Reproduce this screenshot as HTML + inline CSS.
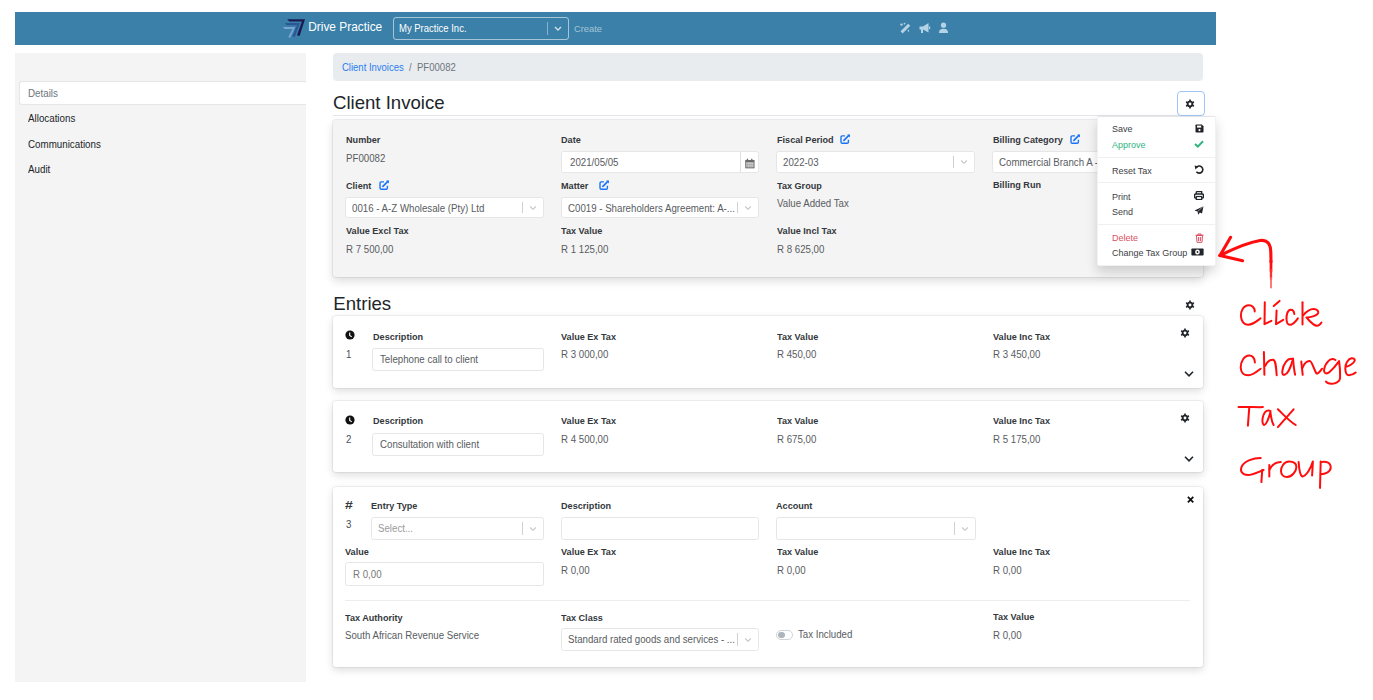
<!DOCTYPE html><html><head><meta charset="utf-8"><style>
html,body{margin:0;padding:0;background:#fff;width:1373px;height:700px;overflow:hidden;position:relative;font-family:"Liberation Sans",sans-serif}
.t{position:absolute;white-space:pre;}
.r{position:absolute;box-sizing:border-box}
</style></head><body>
<div class="r" style="left:15px;top:12px;width:1201px;height:33px;background:#3a80a8"></div>
<svg class="r" style="left:282px;top:19px;" width="24" height="19" viewBox="282 19 24 19"><polygon fill="#7aa6d4" points="282.9,27 295.2,27 290.3,37.8 288.2,37.2 292.4,29 284.6,29"/><polygon fill="#2b5797" points="284.8,23 300,23 294.7,37 292.3,36.3 297,25.3 286.8,25.3"/><polygon fill="#1b1a52" points="287.2,19.3 305,19.3 299.6,36 297,35.2 301.9,21.6 289.3,21.6"/></svg>
<div class="t" style="left:308.2px;top:15px;font-size:11.9px;line-height:24px;color:#ffffff;font-weight:400;">Drive Practice</div>
<div class="r" style="left:392.6px;top:17.3px;width:176.19999999999993px;height:22.400000000000002px;border:1px solid rgba(255,255,255,0.55);border-radius:3px;box-sizing:border-box"></div>
<div class="t" style="left:398.5px;top:17px;font-size:10.07px;line-height:24px;color:#ffffff;font-weight:400;transform:scaleX(0.9434);transform-origin:0 0;">My Practice Inc.</div>
<div class="r" style="left:547px;top:22px;width:1px;height:13px;background:rgba(255,255,255,0.4)"></div>
<svg class="r" style="left:553px;top:25px;" width="10" height="8" viewBox="0 0 10 8"><polyline points="2,2 5,5 8,2" fill="none" stroke="rgba(255,255,255,0.75)" stroke-width="1.4"/></svg>
<div class="t" style="left:573.5px;top:17px;font-size:9.89px;line-height:24px;color:rgba(255,255,255,0.55);font-weight:400;transform:scaleX(0.9434);transform-origin:0 0;">Create</div>
<svg class="r" style="left:899px;top:22px;" width="13" height="13" viewBox="0 0 13 13"><path d="M2.6 10.4 L10.2 2.8" stroke="#b5d3e6" stroke-width="2.9" stroke-linecap="butt"/><circle cx="2.5" cy="2.6" r="1.2" fill="#b5d3e6"/><circle cx="5.5" cy="1.6" r="0.9" fill="#b5d3e6"/><path d="M9.4 7.6 L10.3 8.8 L9.4 10 L8.5 8.8 Z" fill="#b5d3e6"/></svg>
<svg class="r" style="left:918px;top:22px;" width="13" height="12" viewBox="0 0 13 12"><path d="M1.5 4.5 H5 L10.5 1 V10.5 L5 7.5 V11 H3 V7.5 H1.5 Z" fill="#b5d3e6"/><rect x="11" y="4.5" width="1.2" height="2.5" fill="#b5d3e6"/></svg>
<svg class="r" style="left:938px;top:22px;" width="11" height="12" viewBox="0 0 11 12"><circle cx="5.5" cy="3.2" r="2.6" fill="#b5d3e6"/><path d="M1 11 Q1 6.8 5.5 6.8 Q10 6.8 10 11 Z" fill="#b5d3e6"/></svg>
<div class="r" style="left:15px;top:53px;width:291px;height:629px;background:#f4f4f4"></div>
<div class="r" style="left:18.5px;top:81px;width:287.5px;height:24px;background:#fff;border:1px solid #e6e6e6;border-right:none;border-radius:3px 0 0 3px;box-sizing:border-box"></div>
<div class="t" style="left:28.0px;top:82px;font-size:10.39px;line-height:24px;color:#6c757d;font-weight:400;transform:scaleX(0.9432);transform-origin:0 0;">Details</div>
<div class="t" style="left:28.0px;top:107px;font-size:10.39px;line-height:24px;color:#212529;font-weight:400;transform:scaleX(0.9432);transform-origin:0 0;">Allocations</div>
<div class="t" style="left:28.0px;top:133px;font-size:10.39px;line-height:24px;color:#212529;font-weight:400;transform:scaleX(0.9432);transform-origin:0 0;">Communications</div>
<div class="t" style="left:28.0px;top:158px;font-size:10.39px;line-height:24px;color:#212529;font-weight:400;transform:scaleX(0.9432);transform-origin:0 0;">Audit</div>
<div class="r" style="left:333px;top:53px;width:869.7px;height:28px;background:#e9ecef;border-radius:4px"></div>
<div class="t" style="left:342.2px;top:56px;font-size:10.07px;line-height:24px;color:#2a7ef0;font-weight:400;transform:scaleX(0.9434);transform-origin:0 0;">Client Invoices</div>
<div class="t" style="left:408.8px;top:56px;font-size:10.07px;line-height:24px;color:#6c757d;font-weight:400;transform:scaleX(0.9434);transform-origin:0 0;">/</div>
<div class="t" style="left:417.0px;top:56px;font-size:10.15px;line-height:24px;color:#6c757d;font-weight:400;transform:scaleX(0.9438);transform-origin:0 0;">PF00082</div>
<div class="t" style="left:333.0px;top:91px;font-size:18.6px;line-height:24px;color:#212529;font-weight:400;">Client Invoice</div>
<div class="r" style="left:333px;top:115px;width:870px;height:1px;background:#e3e6ea"></div>
<div class="r" style="left:1176.5px;top:91.4px;width:28.0px;height:24.39999999999999px;border:1.5px solid #9fc5f8;border-radius:4px;box-sizing:border-box;background:#fff"></div>
<div class="r" style="left:332.5px;top:120.3px;width:870.5px;height:156.5px;background:#f4f4f4;border-radius:3px;box-shadow:0 0 0 1px rgba(0,0,0,0.06),0 4px 10px rgba(0,0,0,0.14)"></div>
<div class="t" style="left:345.6px;top:128px;font-size:9.83px;line-height:24px;color:#34383d;font-weight:700;transform:scaleX(0.9257);transform-origin:0 0;">Number</div>
<div class="t" style="left:345.6px;top:147px;font-size:10.28px;line-height:24px;color:#585c61;font-weight:400;transform:scaleX(0.9436);transform-origin:0 0;">PF00082</div>
<div class="t" style="left:345.6px;top:174px;font-size:9.83px;line-height:24px;color:#34383d;font-weight:700;transform:scaleX(0.9257);transform-origin:0 0;">Client</div>
<svg class="r" style="left:378.5px;top:179.8px;" width="11" height="11" viewBox="0 0 11 11"><path d="M5 1.9 H2.3 Q1 1.9 1 3.2 V8 Q1 9.3 2.3 9.3 H7.1 Q8.4 9.3 8.4 8 V5.8" fill="none" stroke="#1a74f4" stroke-width="1.4"/><path d="M3.9 6.4 L8.6 1.7" stroke="#1a74f4" stroke-width="1.7" stroke-linecap="round" fill="none"/><polygon points="7.2,0.6 10,0.6 10,3.4" fill="#1a74f4"/></svg>
<div class="r" style="left:345px;top:197px;width:198.5px;height:21px;background:#fff;border:1px solid #e6e6e6;border-radius:2.5px"></div>
<div class="r" style="left:521.5px;top:202px;width:1.0px;height:11px;background:#d0d0d0"></div>
<svg class="r" style="left:528.5px;top:204.5px;" width="8" height="6" viewBox="0 0 8 6"><polyline points="1.2,1.5 4,4.3 6.8,1.5" fill="none" stroke="#c4c4c4" stroke-width="1.1"/></svg>
<div class="t" style="left:352.0px;top:197px;font-size:10.28px;line-height:24px;color:#585c61;font-weight:400;transform:scaleX(0.9436);transform-origin:0 0;">0016 - A-Z Wholesale (Pty) Ltd</div>
<div class="t" style="left:345.6px;top:219px;font-size:9.83px;line-height:24px;color:#34383d;font-weight:700;transform:scaleX(0.9257);transform-origin:0 0;">Value Excl Tax</div>
<div class="t" style="left:345.6px;top:238px;font-size:10.28px;line-height:24px;color:#585c61;font-weight:400;transform:scaleX(0.9436);transform-origin:0 0;">R 7 500,00</div>
<div class="t" style="left:561.4px;top:128px;font-size:9.83px;line-height:24px;color:#34383d;font-weight:700;transform:scaleX(0.9257);transform-origin:0 0;">Date</div>
<div class="r" style="left:561px;top:151px;width:198px;height:22px;background:#fff;border:1px solid #e6e6e6;border-radius:2.5px"></div>
<div class="r" style="left:740px;top:152px;width:1px;height:20px;background:#e0e0e0"></div>
<svg class="r" style="left:745px;top:157px;" width="10" height="12" viewBox="0 0 10 12"><path d="M2.4 1.2 L3.6 3.5 H1.2 Z M6.8 1.2 L8 3.5 H5.6 Z" fill="#6a6a6a"/><rect x="0.8" y="3.6" width="8.2" height="7.2" fill="none" stroke="#6a6a6a" stroke-width="1.1"/><rect x="0.8" y="3.6" width="8.2" height="1.8" fill="#6a6a6a"/><path d="M2.85 5 V10.5 M4.9 5 V10.5 M6.95 5 V10.5 M1 7.3 H8.8 M1 9.1 H8.8" stroke="#8a8a8a" stroke-width="0.7"/></svg>
<div class="t" style="left:569.5px;top:151px;font-size:10.28px;line-height:24px;color:#585c61;font-weight:400;transform:scaleX(0.9436);transform-origin:0 0;">2021/05/05</div>
<div class="t" style="left:561.4px;top:174px;font-size:9.83px;line-height:24px;color:#34383d;font-weight:700;transform:scaleX(0.9257);transform-origin:0 0;">Matter</div>
<svg class="r" style="left:598.6px;top:179.8px;" width="11" height="11" viewBox="0 0 11 11"><path d="M5 1.9 H2.3 Q1 1.9 1 3.2 V8 Q1 9.3 2.3 9.3 H7.1 Q8.4 9.3 8.4 8 V5.8" fill="none" stroke="#1a74f4" stroke-width="1.4"/><path d="M3.9 6.4 L8.6 1.7" stroke="#1a74f4" stroke-width="1.7" stroke-linecap="round" fill="none"/><polygon points="7.2,0.6 10,0.6 10,3.4" fill="#1a74f4"/></svg>
<div class="r" style="left:561px;top:197px;width:198px;height:21px;background:#fff;border:1px solid #e6e6e6;border-radius:2.5px"></div>
<div class="r" style="left:737px;top:202px;width:1px;height:11px;background:#d0d0d0"></div>
<svg class="r" style="left:744px;top:204.5px;" width="8" height="6" viewBox="0 0 8 6"><polyline points="1.2,1.5 4,4.3 6.8,1.5" fill="none" stroke="#c4c4c4" stroke-width="1.1"/></svg>
<div class="t" style="left:567.5px;top:197px;font-size:10.28px;line-height:24px;color:#585c61;font-weight:400;transform:scaleX(0.9436);transform-origin:0 0;">C0019 - Shareholders Agreement: A-...</div>
<div class="t" style="left:561.4px;top:219px;font-size:9.83px;line-height:24px;color:#34383d;font-weight:700;transform:scaleX(0.9257);transform-origin:0 0;">Tax Value</div>
<div class="t" style="left:561.4px;top:238px;font-size:10.28px;line-height:24px;color:#585c61;font-weight:400;transform:scaleX(0.9436);transform-origin:0 0;">R 1 125,00</div>
<div class="t" style="left:776.8px;top:128px;font-size:9.83px;line-height:24px;color:#34383d;font-weight:700;transform:scaleX(0.9257);transform-origin:0 0;">Fiscal Period</div>
<svg class="r" style="left:840.3px;top:134px;" width="11" height="11" viewBox="0 0 11 11"><path d="M5 1.9 H2.3 Q1 1.9 1 3.2 V8 Q1 9.3 2.3 9.3 H7.1 Q8.4 9.3 8.4 8 V5.8" fill="none" stroke="#1a74f4" stroke-width="1.4"/><path d="M3.9 6.4 L8.6 1.7" stroke="#1a74f4" stroke-width="1.7" stroke-linecap="round" fill="none"/><polygon points="7.2,0.6 10,0.6 10,3.4" fill="#1a74f4"/></svg>
<div class="r" style="left:776px;top:151px;width:199px;height:22px;background:#fff;border:1px solid #e6e6e6;border-radius:2.5px"></div>
<div class="r" style="left:953px;top:156px;width:1px;height:12px;background:#d0d0d0"></div>
<svg class="r" style="left:960px;top:159.0px;" width="8" height="6" viewBox="0 0 8 6"><polyline points="1.2,1.5 4,4.3 6.8,1.5" fill="none" stroke="#c4c4c4" stroke-width="1.1"/></svg>
<div class="t" style="left:783.3px;top:151px;font-size:10.28px;line-height:24px;color:#585c61;font-weight:400;transform:scaleX(0.9436);transform-origin:0 0;">2022-03</div>
<div class="t" style="left:776.8px;top:174px;font-size:9.83px;line-height:24px;color:#34383d;font-weight:700;transform:scaleX(0.9257);transform-origin:0 0;">Tax Group</div>
<div class="t" style="left:776.8px;top:192px;font-size:10.28px;line-height:24px;color:#585c61;font-weight:400;transform:scaleX(0.9436);transform-origin:0 0;">Value Added Tax</div>
<div class="t" style="left:776.8px;top:219px;font-size:9.83px;line-height:24px;color:#34383d;font-weight:700;transform:scaleX(0.9257);transform-origin:0 0;">Value Incl Tax</div>
<div class="t" style="left:776.8px;top:238px;font-size:10.28px;line-height:24px;color:#585c61;font-weight:400;transform:scaleX(0.9436);transform-origin:0 0;">R 8 625,00</div>
<div class="t" style="left:992.5px;top:128px;font-size:9.83px;line-height:24px;color:#34383d;font-weight:700;transform:scaleX(0.9257);transform-origin:0 0;">Billing Category</div>
<svg class="r" style="left:1069.9px;top:134px;" width="11" height="11" viewBox="0 0 11 11"><path d="M5 1.9 H2.3 Q1 1.9 1 3.2 V8 Q1 9.3 2.3 9.3 H7.1 Q8.4 9.3 8.4 8 V5.8" fill="none" stroke="#1a74f4" stroke-width="1.4"/><path d="M3.9 6.4 L8.6 1.7" stroke="#1a74f4" stroke-width="1.7" stroke-linecap="round" fill="none"/><polygon points="7.2,0.6 10,0.6 10,3.4" fill="#1a74f4"/></svg>
<div class="r" style="left:992px;top:151px;width:198px;height:22px;background:#fff;border:1px solid #e6e6e6;border-radius:2.5px"></div>
<div class="t" style="left:999.0px;top:151px;font-size:10.28px;line-height:24px;color:#585c61;font-weight:400;transform:scaleX(0.9436);transform-origin:0 0;">Commercial Branch A -</div>
<div class="t" style="left:992.5px;top:173px;font-size:9.83px;line-height:24px;color:#34383d;font-weight:700;transform:scaleX(0.9257);transform-origin:0 0;">Billing Run</div>
<div class="r" style="left:1097px;top:115.7px;width:118.79999999999995px;height:150.0px;background:#fff;border:1px solid rgba(0,0,0,0.05);border-top-color:rgba(0,0,0,0.1);border-radius:2px;box-shadow:0 6px 12px rgba(0,0,0,0.16)"></div>
<div class="t" style="left:1111.5px;top:117px;font-size:9.54px;line-height:24px;color:#3d4146;font-weight:400;transform:scaleX(0.9434);transform-origin:0 0;">Save</div>
<div class="t" style="left:1111.5px;top:133px;font-size:9.54px;line-height:24px;color:#2eb67f;font-weight:400;transform:scaleX(0.9434);transform-origin:0 0;">Approve</div>
<div class="r" style="left:1097.5px;top:157px;width:118.0px;height:1px;background:#eef0f2"></div>
<div class="t" style="left:1111.5px;top:159px;font-size:9.54px;line-height:24px;color:#3d4146;font-weight:400;transform:scaleX(0.9434);transform-origin:0 0;">Reset Tax</div>
<div class="r" style="left:1097.5px;top:182px;width:118.0px;height:1px;background:#eef0f2"></div>
<div class="t" style="left:1111.5px;top:185px;font-size:9.54px;line-height:24px;color:#3d4146;font-weight:400;transform:scaleX(0.9434);transform-origin:0 0;">Print</div>
<div class="t" style="left:1111.5px;top:200px;font-size:9.54px;line-height:24px;color:#3d4146;font-weight:400;transform:scaleX(0.9434);transform-origin:0 0;">Send</div>
<div class="r" style="left:1097.5px;top:224px;width:118.0px;height:1px;background:#eef0f2"></div>
<div class="t" style="left:1111.5px;top:226px;font-size:9.54px;line-height:24px;color:#dc4e63;font-weight:400;transform:scaleX(0.9434);transform-origin:0 0;">Delete</div>
<div class="t" style="left:1111.5px;top:241px;font-size:9.54px;line-height:24px;color:#3d4146;font-weight:400;transform:scaleX(0.9434);transform-origin:0 0;">Change Tax Group</div>
<svg class="r" style="left:1195px;top:123.5px;" width="9" height="9" viewBox="0 0 9 9"><path d="M0.5 1.2 Q0.5 0.5 1.2 0.5 H6.8 L8.5 2.2 V7.8 Q8.5 8.5 7.8 8.5 H1.2 Q0.5 8.5 0.5 7.8 Z" fill="#212529"/><rect x="2" y="1.6" width="4.2" height="2" fill="#fff"/><circle cx="4.5" cy="6.1" r="1.1" fill="#fff"/></svg>
<svg class="r" style="left:1194px;top:139.5px;" width="10" height="8" viewBox="0 0 10 8"><polyline points="1,4 3.8,6.6 9,1.2" fill="none" stroke="#2eb67f" stroke-width="2"/></svg>
<svg class="r" style="left:1194px;top:165px;" width="10" height="9" viewBox="0 0 10 9"><path d="M2.2 2.6 A3.6 3.6 0 1 1 2.4 6.8" fill="none" stroke="#212529" stroke-width="1.6"/><polygon points="0.6,0.6 4.6,1.4 1.4,4.4" fill="#212529"/></svg>
<svg class="r" style="left:1194px;top:191px;" width="10" height="9" viewBox="0 0 10 9"><path d="M2.3 0.6 H7.7 V3 M2.3 3 V0.6" fill="none" stroke="#212529" stroke-width="1.3"/><rect x="0.6" y="3" width="8.8" height="4" rx="1" fill="none" stroke="#212529" stroke-width="1.4"/><rect x="2.3" y="5.5" width="5.4" height="3" fill="#fff" stroke="#212529" stroke-width="1.2"/></svg>
<svg class="r" style="left:1194px;top:206px;" width="10" height="9" viewBox="0 0 10 9"><path d="M9.5 0.3 L0.5 4.5 L3.5 5.6 L4.3 8.7 L5.8 6.5 L8 7.5 Z" fill="#212529"/><path d="M9.5 0.3 L3.6 5.5" stroke="#fff" stroke-width="0.5"/></svg>
<svg class="r" style="left:1195px;top:232.5px;" width="9" height="10" viewBox="0 0 9 10"><path d="M1.5 2.5 H7.5 L7 9.3 H2 Z M0.5 2.2 H8.5 M3 2.2 V1 H6 V2.2 M3.6 4 V8 M5.4 4 V8" fill="none" stroke="#dc4e63" stroke-width="1"/></svg>
<svg class="r" style="left:1191px;top:248px;" width="13" height="8" viewBox="0 0 13 8"><rect x="0.4" y="0.4" width="12.2" height="7.2" rx="0.8" fill="#212529"/><ellipse cx="6.5" cy="4" rx="2.3" ry="2.6" fill="#fff"/><circle cx="6.5" cy="4" r="0.9" fill="#212529"/></svg>
<svg class="r" style="left:1184.15px;top:97.5px;" width="12" height="12" viewBox="1184.15 97.5 12 12"><polygon points="1193.48,103.50 1193.47,103.79 1193.43,104.08 1193.37,104.36 1194.38,105.04 1194.23,105.40 1194.05,105.75 1193.84,106.08 1193.60,106.39 1192.50,105.85 1192.29,106.05 1192.06,106.23 1191.82,106.38 1191.56,106.52 1191.29,106.63 1191.01,106.72 1190.93,107.93 1190.54,107.98 1190.15,108.00 1189.76,107.98 1189.37,107.93 1189.29,106.72 1189.01,106.63 1188.74,106.52 1188.49,106.38 1188.24,106.23 1188.01,106.05 1187.80,105.85 1186.70,106.39 1186.46,106.08 1186.25,105.75 1186.07,105.40 1185.92,105.04 1186.93,104.36 1186.87,104.08 1186.83,103.79 1186.82,103.50 1186.83,103.21 1186.87,102.92 1186.93,102.64 1185.92,101.96 1186.07,101.60 1186.25,101.25 1186.46,100.92 1186.70,100.61 1187.80,101.15 1188.01,100.95 1188.24,100.77 1188.49,100.62 1188.74,100.48 1189.01,100.37 1189.29,100.28 1189.37,99.07 1189.76,99.02 1190.15,99.00 1190.54,99.02 1190.93,99.07 1191.01,100.28 1191.29,100.37 1191.56,100.48 1191.82,100.62 1192.06,100.77 1192.29,100.95 1192.50,101.15 1193.60,100.61 1193.84,100.92 1194.05,101.25 1194.23,101.60 1194.38,101.96 1193.37,102.64 1193.43,102.92 1193.47,103.21" fill="#212529"/><circle cx="1190.15" cy="103.5" r="1.45" fill="#fff"/></svg>
<div class="t" style="left:333.3px;top:292px;font-size:18.6px;line-height:24px;color:#212529;font-weight:400;">Entries</div>
<svg class="r" style="left:1184.3px;top:299.4px;" width="12" height="12" viewBox="1184.3 299.4 12 12"><polygon points="1193.63,305.40 1193.62,305.69 1193.58,305.98 1193.52,306.26 1194.53,306.94 1194.38,307.30 1194.20,307.65 1193.99,307.98 1193.75,308.29 1192.65,307.75 1192.44,307.95 1192.21,308.13 1191.96,308.28 1191.71,308.42 1191.44,308.53 1191.16,308.62 1191.08,309.83 1190.69,309.88 1190.30,309.90 1189.91,309.88 1189.52,309.83 1189.44,308.62 1189.16,308.53 1188.89,308.42 1188.63,308.28 1188.39,308.13 1188.16,307.95 1187.95,307.75 1186.85,308.29 1186.61,307.98 1186.40,307.65 1186.22,307.30 1186.07,306.94 1187.08,306.26 1187.02,305.98 1186.98,305.69 1186.97,305.40 1186.98,305.11 1187.02,304.82 1187.08,304.54 1186.07,303.86 1186.22,303.50 1186.40,303.15 1186.61,302.82 1186.85,302.51 1187.95,303.05 1188.16,302.85 1188.39,302.67 1188.63,302.52 1188.89,302.38 1189.16,302.27 1189.44,302.18 1189.52,300.97 1189.91,300.92 1190.30,300.90 1190.69,300.92 1191.08,300.97 1191.16,302.18 1191.44,302.27 1191.71,302.38 1191.96,302.52 1192.21,302.67 1192.44,302.85 1192.65,303.05 1193.75,302.51 1193.99,302.82 1194.20,303.15 1194.38,303.50 1194.53,303.86 1193.52,304.54 1193.58,304.82 1193.62,305.11" fill="#212529"/><circle cx="1190.3" cy="305.4" r="1.45" fill="#fff"/></svg>
<div class="r" style="left:333px;top:316.4px;width:870px;height:71.19999999999999px;background:#fff;border-radius:3px;box-shadow:0 0 0 1px rgba(0,0,0,0.05),0 3px 9px rgba(0,0,0,0.14)"></div>
<svg class="r" style="left:343.9px;top:329.4px;" width="12" height="12" viewBox="343.9 329.4 12 12"><circle cx="349.9" cy="335.4" r="4.6" fill="#111"/><path d="M349.59999999999997 332.79999999999995 V335.9 L351.7 337.29999999999995" fill="none" stroke="#fff" stroke-width="1.1"/></svg>
<div class="t" style="left:372.5px;top:325px;font-size:9.83px;line-height:24px;color:#34383d;font-weight:700;transform:scaleX(0.9257);transform-origin:0 0;">Description</div>
<div class="t" style="left:346.0px;top:343px;font-size:10.28px;line-height:24px;color:#495057;font-weight:400;transform:scaleX(0.9436);transform-origin:0 0;">1</div>
<div class="r" style="left:372px;top:348px;width:172px;height:23px;background:#fff;border:1px solid #e6e6e6;border-radius:2.5px"></div>
<div class="t" style="left:380.3px;top:348px;font-size:10.28px;line-height:24px;color:#585c61;font-weight:400;transform:scaleX(0.9436);transform-origin:0 0;">Telephone call to client</div>
<div class="t" style="left:561.4px;top:325px;font-size:9.83px;line-height:24px;color:#34383d;font-weight:700;transform:scaleX(0.9257);transform-origin:0 0;">Value Ex Tax</div>
<div class="t" style="left:561.4px;top:343px;font-size:10.28px;line-height:24px;color:#585c61;font-weight:400;transform:scaleX(0.9436);transform-origin:0 0;">R 3 000,00</div>
<div class="t" style="left:776.7px;top:325px;font-size:9.83px;line-height:24px;color:#34383d;font-weight:700;transform:scaleX(0.9257);transform-origin:0 0;">Tax Value</div>
<div class="t" style="left:776.7px;top:343px;font-size:10.28px;line-height:24px;color:#585c61;font-weight:400;transform:scaleX(0.9436);transform-origin:0 0;">R 450,00</div>
<div class="t" style="left:992.6px;top:325px;font-size:9.83px;line-height:24px;color:#34383d;font-weight:700;transform:scaleX(0.9257);transform-origin:0 0;">Value Inc Tax</div>
<div class="t" style="left:992.6px;top:343px;font-size:10.28px;line-height:24px;color:#585c61;font-weight:400;transform:scaleX(0.9436);transform-origin:0 0;">R 3 450,00</div>
<svg class="r" style="left:1179.1px;top:327.29999999999995px;" width="12" height="12" viewBox="1179.1 327.29999999999995 12 12"><polygon points="1188.43,333.30 1188.42,333.59 1188.38,333.88 1188.32,334.16 1189.33,334.84 1189.18,335.20 1189.00,335.55 1188.79,335.88 1188.55,336.19 1187.45,335.65 1187.24,335.85 1187.01,336.03 1186.76,336.18 1186.51,336.32 1186.24,336.43 1185.96,336.52 1185.88,337.73 1185.49,337.78 1185.10,337.80 1184.71,337.78 1184.32,337.73 1184.24,336.52 1183.96,336.43 1183.69,336.32 1183.43,336.18 1183.19,336.03 1182.96,335.85 1182.75,335.65 1181.65,336.19 1181.41,335.88 1181.20,335.55 1181.02,335.20 1180.87,334.84 1181.88,334.16 1181.82,333.88 1181.78,333.59 1181.77,333.30 1181.78,333.01 1181.82,332.72 1181.88,332.44 1180.87,331.76 1181.02,331.40 1181.20,331.05 1181.41,330.72 1181.65,330.41 1182.75,330.95 1182.96,330.75 1183.19,330.57 1183.43,330.42 1183.69,330.28 1183.96,330.17 1184.24,330.08 1184.32,328.87 1184.71,328.82 1185.10,328.80 1185.49,328.82 1185.88,328.87 1185.96,330.08 1186.24,330.17 1186.51,330.28 1186.76,330.42 1187.01,330.57 1187.24,330.75 1187.45,330.95 1188.55,330.41 1188.79,330.72 1189.00,331.05 1189.18,331.40 1189.33,331.76 1188.32,332.44 1188.38,332.72 1188.42,333.01" fill="#212529"/><circle cx="1185.1" cy="333.29999999999995" r="1.45" fill="#fff"/></svg>
<svg class="r" style="left:1184.3px;top:370.4px;" width="10" height="8" viewBox="0 0 10 8"><polyline points="1,1.8 5,5.8 9,1.8" fill="none" stroke="#212529" stroke-width="1.6"/></svg>
<div class="r" style="left:333px;top:401.3px;width:870px;height:71.19999999999999px;background:#fff;border-radius:3px;box-shadow:0 0 0 1px rgba(0,0,0,0.05),0 3px 9px rgba(0,0,0,0.14)"></div>
<svg class="r" style="left:343.9px;top:414.3px;" width="12" height="12" viewBox="343.9 414.3 12 12"><circle cx="349.9" cy="420.3" r="4.6" fill="#111"/><path d="M349.59999999999997 417.7 V420.8 L351.7 422.2" fill="none" stroke="#fff" stroke-width="1.1"/></svg>
<div class="t" style="left:372.5px;top:409px;font-size:9.83px;line-height:24px;color:#34383d;font-weight:700;transform:scaleX(0.9257);transform-origin:0 0;">Description</div>
<div class="t" style="left:346.0px;top:428px;font-size:10.28px;line-height:24px;color:#495057;font-weight:400;transform:scaleX(0.9436);transform-origin:0 0;">2</div>
<div class="r" style="left:372px;top:433px;width:172px;height:23px;background:#fff;border:1px solid #e6e6e6;border-radius:2.5px"></div>
<div class="t" style="left:380.3px;top:433px;font-size:10.28px;line-height:24px;color:#585c61;font-weight:400;transform:scaleX(0.9436);transform-origin:0 0;">Consultation with client</div>
<div class="t" style="left:561.4px;top:409px;font-size:9.83px;line-height:24px;color:#34383d;font-weight:700;transform:scaleX(0.9257);transform-origin:0 0;">Value Ex Tax</div>
<div class="t" style="left:561.4px;top:428px;font-size:10.28px;line-height:24px;color:#585c61;font-weight:400;transform:scaleX(0.9436);transform-origin:0 0;">R 4 500,00</div>
<div class="t" style="left:776.7px;top:409px;font-size:9.83px;line-height:24px;color:#34383d;font-weight:700;transform:scaleX(0.9257);transform-origin:0 0;">Tax Value</div>
<div class="t" style="left:776.7px;top:428px;font-size:10.28px;line-height:24px;color:#585c61;font-weight:400;transform:scaleX(0.9436);transform-origin:0 0;">R 675,00</div>
<div class="t" style="left:992.6px;top:409px;font-size:9.83px;line-height:24px;color:#34383d;font-weight:700;transform:scaleX(0.9257);transform-origin:0 0;">Value Inc Tax</div>
<div class="t" style="left:992.6px;top:428px;font-size:10.28px;line-height:24px;color:#585c61;font-weight:400;transform:scaleX(0.9436);transform-origin:0 0;">R 5 175,00</div>
<svg class="r" style="left:1179.1px;top:412.2px;" width="12" height="12" viewBox="1179.1 412.2 12 12"><polygon points="1188.43,418.20 1188.42,418.49 1188.38,418.78 1188.32,419.06 1189.33,419.74 1189.18,420.10 1189.00,420.45 1188.79,420.78 1188.55,421.09 1187.45,420.55 1187.24,420.75 1187.01,420.93 1186.76,421.08 1186.51,421.22 1186.24,421.33 1185.96,421.42 1185.88,422.63 1185.49,422.68 1185.10,422.70 1184.71,422.68 1184.32,422.63 1184.24,421.42 1183.96,421.33 1183.69,421.22 1183.43,421.08 1183.19,420.93 1182.96,420.75 1182.75,420.55 1181.65,421.09 1181.41,420.78 1181.20,420.45 1181.02,420.10 1180.87,419.74 1181.88,419.06 1181.82,418.78 1181.78,418.49 1181.77,418.20 1181.78,417.91 1181.82,417.62 1181.88,417.34 1180.87,416.66 1181.02,416.30 1181.20,415.95 1181.41,415.62 1181.65,415.31 1182.75,415.85 1182.96,415.65 1183.19,415.47 1183.43,415.32 1183.69,415.18 1183.96,415.07 1184.24,414.98 1184.32,413.77 1184.71,413.72 1185.10,413.70 1185.49,413.72 1185.88,413.77 1185.96,414.98 1186.24,415.07 1186.51,415.18 1186.76,415.32 1187.01,415.47 1187.24,415.65 1187.45,415.85 1188.55,415.31 1188.79,415.62 1189.00,415.95 1189.18,416.30 1189.33,416.66 1188.32,417.34 1188.38,417.62 1188.42,417.91" fill="#212529"/><circle cx="1185.1" cy="418.2" r="1.45" fill="#fff"/></svg>
<svg class="r" style="left:1184.3px;top:455.3px;" width="10" height="8" viewBox="0 0 10 8"><polyline points="1,1.8 5,5.8 9,1.8" fill="none" stroke="#212529" stroke-width="1.6"/></svg>
<div class="r" style="left:333px;top:487px;width:870px;height:180px;background:#fff;border-radius:3px;box-shadow:0 0 0 1px rgba(0,0,0,0.05),0 3px 9px rgba(0,0,0,0.14)"></div>
<div class="t" style="left:345.2px;top:494px;font-size:10.0px;line-height:24px;color:#34383d;font-weight:700;transform:scaleX(1.4000);transform-origin:0 0;">#</div>
<div class="t" style="left:371.4px;top:494px;font-size:9.83px;line-height:24px;color:#34383d;font-weight:700;transform:scaleX(0.9257);transform-origin:0 0;">Entry Type</div>
<div class="t" style="left:561.4px;top:494px;font-size:9.83px;line-height:24px;color:#34383d;font-weight:700;transform:scaleX(0.9257);transform-origin:0 0;">Description</div>
<div class="t" style="left:776.4px;top:494px;font-size:9.83px;line-height:24px;color:#34383d;font-weight:700;transform:scaleX(0.9257);transform-origin:0 0;">Account</div>
<svg class="r" style="left:1186px;top:495px;" width="9" height="9" viewBox="0 0 9 9"><path d="M1.9 1.9 L7.3 7.3 M7.3 1.9 L1.9 7.3" stroke="#111" stroke-width="1.8"/></svg>
<div class="t" style="left:346.0px;top:513px;font-size:10.28px;line-height:24px;color:#495057;font-weight:400;transform:scaleX(0.9436);transform-origin:0 0;">3</div>
<div class="r" style="left:371px;top:517px;width:173px;height:23px;background:#fff;border:1px solid #e6e6e6;border-radius:2.5px"></div>
<div class="r" style="left:522px;top:522px;width:1px;height:13px;background:#d0d0d0"></div>
<svg class="r" style="left:529px;top:525.5px;" width="8" height="6" viewBox="0 0 8 6"><polyline points="1.2,1.5 4,4.3 6.8,1.5" fill="none" stroke="#c4c4c4" stroke-width="1.1"/></svg>
<div class="t" style="left:377.6px;top:517px;font-size:10.28px;line-height:24px;color:#9a9a9a;font-weight:400;transform:scaleX(0.9436);transform-origin:0 0;">Select...</div>
<div class="r" style="left:561px;top:517px;width:198px;height:23px;background:#fff;border:1px solid #e6e6e6;border-radius:2.5px"></div>
<div class="r" style="left:776px;top:517px;width:199.5px;height:23px;background:#fff;border:1px solid #e6e6e6;border-radius:2.5px"></div>
<div class="r" style="left:953.5px;top:522px;width:1.0px;height:13px;background:#d0d0d0"></div>
<svg class="r" style="left:960.5px;top:525.5px;" width="8" height="6" viewBox="0 0 8 6"><polyline points="1.2,1.5 4,4.3 6.8,1.5" fill="none" stroke="#c4c4c4" stroke-width="1.1"/></svg>
<div class="t" style="left:345.4px;top:540px;font-size:9.83px;line-height:24px;color:#34383d;font-weight:700;transform:scaleX(0.9257);transform-origin:0 0;">Value</div>
<div class="t" style="left:561.4px;top:540px;font-size:9.83px;line-height:24px;color:#34383d;font-weight:700;transform:scaleX(0.9257);transform-origin:0 0;">Value Ex Tax</div>
<div class="t" style="left:776.7px;top:540px;font-size:9.83px;line-height:24px;color:#34383d;font-weight:700;transform:scaleX(0.9257);transform-origin:0 0;">Tax Value</div>
<div class="t" style="left:992.6px;top:540px;font-size:9.83px;line-height:24px;color:#34383d;font-weight:700;transform:scaleX(0.9257);transform-origin:0 0;">Value Inc Tax</div>
<div class="r" style="left:345px;top:562px;width:198.5px;height:24px;background:#fff;border:1px solid #e6e6e6;border-radius:2.5px"></div>
<div class="t" style="left:352.5px;top:563px;font-size:10.28px;line-height:24px;color:#777;font-weight:400;transform:scaleX(0.9436);transform-origin:0 0;">R 0,00</div>
<div class="t" style="left:561.4px;top:559px;font-size:10.28px;line-height:24px;color:#585c61;font-weight:400;transform:scaleX(0.9436);transform-origin:0 0;">R 0,00</div>
<div class="t" style="left:776.7px;top:559px;font-size:10.28px;line-height:24px;color:#585c61;font-weight:400;transform:scaleX(0.9436);transform-origin:0 0;">R 0,00</div>
<div class="t" style="left:992.6px;top:559px;font-size:10.28px;line-height:24px;color:#585c61;font-weight:400;transform:scaleX(0.9436);transform-origin:0 0;">R 0,00</div>
<div class="r" style="left:345.4px;top:600px;width:845.1px;height:1px;background:#ededed"></div>
<div class="t" style="left:345.4px;top:606px;font-size:9.83px;line-height:24px;color:#34383d;font-weight:700;transform:scaleX(0.9257);transform-origin:0 0;">Tax Authority</div>
<div class="t" style="left:345.4px;top:624px;font-size:10.28px;line-height:24px;color:#585c61;font-weight:400;transform:scaleX(0.9436);transform-origin:0 0;">South African Revenue Service</div>
<div class="t" style="left:561.4px;top:606px;font-size:9.83px;line-height:24px;color:#34383d;font-weight:700;transform:scaleX(0.9257);transform-origin:0 0;">Tax Class</div>
<div class="r" style="left:561px;top:628px;width:198px;height:23px;background:#fff;border:1px solid #e6e6e6;border-radius:2.5px"></div>
<div class="r" style="left:737px;top:633px;width:1px;height:13px;background:#d0d0d0"></div>
<svg class="r" style="left:744px;top:636.5px;" width="8" height="6" viewBox="0 0 8 6"><polyline points="1.2,1.5 4,4.3 6.8,1.5" fill="none" stroke="#c4c4c4" stroke-width="1.1"/></svg>
<div class="t" style="left:567.5px;top:628px;font-size:10.28px;line-height:24px;color:#585c61;font-weight:400;transform:scaleX(0.9436);transform-origin:0 0;">Standard rated goods and services - ...</div>
<div class="r" style="left:776.3px;top:630.4px;width:16.5px;height:9.200000000000045px;border:1px solid #cfd4d9;border-radius:5px;background:#fff"></div>
<div class="r" style="left:777.9px;top:631.6px;width:6.7000000000000455px;height:6.699999999999932px;border-radius:50%;background:#adb5bd"></div>
<div class="t" style="left:797.8px;top:623px;font-size:10.28px;line-height:24px;color:#585c61;font-weight:400;transform:scaleX(0.9436);transform-origin:0 0;">Tax Included</div>
<div class="t" style="left:992.8px;top:605px;font-size:9.83px;line-height:24px;color:#34383d;font-weight:700;transform:scaleX(0.9257);transform-origin:0 0;">Tax Value</div>
<div class="t" style="left:992.8px;top:624px;font-size:10.28px;line-height:24px;color:#585c61;font-weight:400;transform:scaleX(0.9436);transform-origin:0 0;">R 0,00</div>
<svg class="r" style="left:1200px;top:220px" width="173" height="280" viewBox="1200 220 173 280"><g fill="none" stroke="#ff0d0d" stroke-width="2" stroke-linecap="round" stroke-linejoin="round"><path d="M1220,255.5 Q1245,243 1260,240.5 Q1270.5,239 1270.8,252 L1271,262" stroke-width="3.1"/><path d="M1271,261 L1271,271" stroke-width="2.7"/><path d="M1271,270 L1271,279" stroke-width="2.3" stroke="#ff3030"/><path d="M1271,278 L1271,287.5" stroke-width="1.8" stroke="#ff6a6a"/><path d="M1220,255.5 L1230.6,237.3" stroke-width="3.1"/><path d="M1220,255.5 L1242.6,260.7" stroke-width="3.1"/><path d="M1254.7,311.4 C1255,308 1252,305 1248.8,305.2 C1243,305.5 1240.5,312 1240.9,316 C1241.2,321 1244,325 1248.1,324.8 C1253,324.6 1257,321 1260.6,318.3"/><path d="M1264.8,302.2 L1264.5,324.2 Q1267,323 1271.4,320.9"/><path d="M1273.7,306.1 L1279.6,300.9"/><path d="M1276.6,310.4 L1276,324.2 Q1279,322.5 1283.2,319.9"/><path d="M1294.3,314 C1294,311 1292.5,309.7 1290.7,309.7 C1287.5,309.7 1286.3,315 1286.5,319.3 C1286.7,323 1288,324.8 1289.8,324.8 C1293,324.8 1296,321 1297.9,318.3"/><path d="M1302.5,302.2 L1302.5,324.5"/><path d="M1303.2,315.3 C1307,311 1311,309 1313.7,309.1 C1317,309.2 1318.5,311 1318.2,312.7 C1317.5,315.5 1311,317.5 1306.4,317.6 C1309,320 1313,325.5 1316.9,325.8 C1318.5,325.9 1320.5,324 1321.5,322.5"/><path d="M1254.9,362.5 C1255,358 1252,355.3 1249.2,355.4 C1244,355.6 1240.5,362 1240.7,367.7 C1241,372.5 1244,375.3 1248.3,375.3 C1253,375.2 1257,371.5 1260.6,368.7"/><path d="M1263.9,352.1 L1264.4,374.8"/><path d="M1265.3,365.8 C1267,362 1270,359.7 1272.9,359.7 C1275.5,359.7 1276,365 1276.7,375.3"/><path d="M1292,359 C1288,357.5 1283,364 1282.3,371 C1282,374 1283,375 1284.5,374.8 C1287.5,374 1291,367 1293,359"/><path d="M1293,358.5 C1293.5,364 1294,370 1295.1,374.8"/><path d="M1301.3,361.6 L1302.7,374.8"/><path d="M1302.5,368 C1304,364 1307,361 1309.8,361.1 C1312,361.2 1314,370 1316.4,373.4 C1318,374.5 1320,371 1322.1,368.7"/><path d="M1335.5,360 C1333,358.5 1330,359 1328,361.5 C1325,364.5 1323.5,369.5 1324.3,371.8 C1325,374 1327.5,373.8 1329.5,372 C1333,369 1337,364 1339.1,361.1 C1339.8,366 1340.3,372 1340.1,378.1 C1339.8,382 1335,384 1331.6,383.8 C1328.5,383.6 1326.5,382.5 1325.9,381.5"/><path d="M1345.8,366.8 C1349,366.5 1354,363 1354.8,360.5 C1355,358.8 1353,358 1351.5,358.3 C1348,359 1345,364 1345.3,368.7 C1345.5,372.5 1347,375.3 1348.9,375.3 C1351.5,375.2 1354,374 1355.7,372.5"/><path d="M1238.6,407.1 C1245,406.6 1255,407.3 1262.9,407.1"/><path d="M1249.3,407.1 L1247.9,425.7"/><path d="M1270.5,411 C1268,409.5 1265,411 1263.5,415 C1262,419 1262,424 1263.8,425 C1266,425.5 1269,418 1270.4,412 C1271,417 1272,422 1273.6,425"/><path d="M1277.9,409.3 C1283,414 1289,421 1295.7,425"/><path d="M1293.6,409.3 L1277.9,427.1"/><path d="M1260.7,457.9 C1254,457.8 1244,461 1241.5,467 C1240,471 1242,475 1248,475 C1253,475 1259,471.5 1263.6,470"/><path d="M1262.2,470 L1261.4,482.1"/><path d="M1269.3,465 L1269.3,476.4"/><path d="M1269.5,469.5 C1272,465 1276,462.3 1280.7,462.1"/><path d="M1289,461.5 C1284,461.5 1281,467 1281,471 C1281,474.5 1283.5,477 1287,477 C1292,477 1296.4,471 1296.4,467 C1296.4,463 1293,461.5 1289,461.5 Z"/><path d="M1298.6,462.1 C1299,467 1299.5,475 1302.1,476.4 C1306,476.8 1311,468 1312.9,461.4 L1312.1,475.5"/><path d="M1320.7,461.4 L1320,487.9"/><path d="M1321.4,462.1 C1325,461 1331,462 1330.7,467.9 C1330.4,472 1325,474 1320.7,474.3"/></g></svg>
</body></html>
